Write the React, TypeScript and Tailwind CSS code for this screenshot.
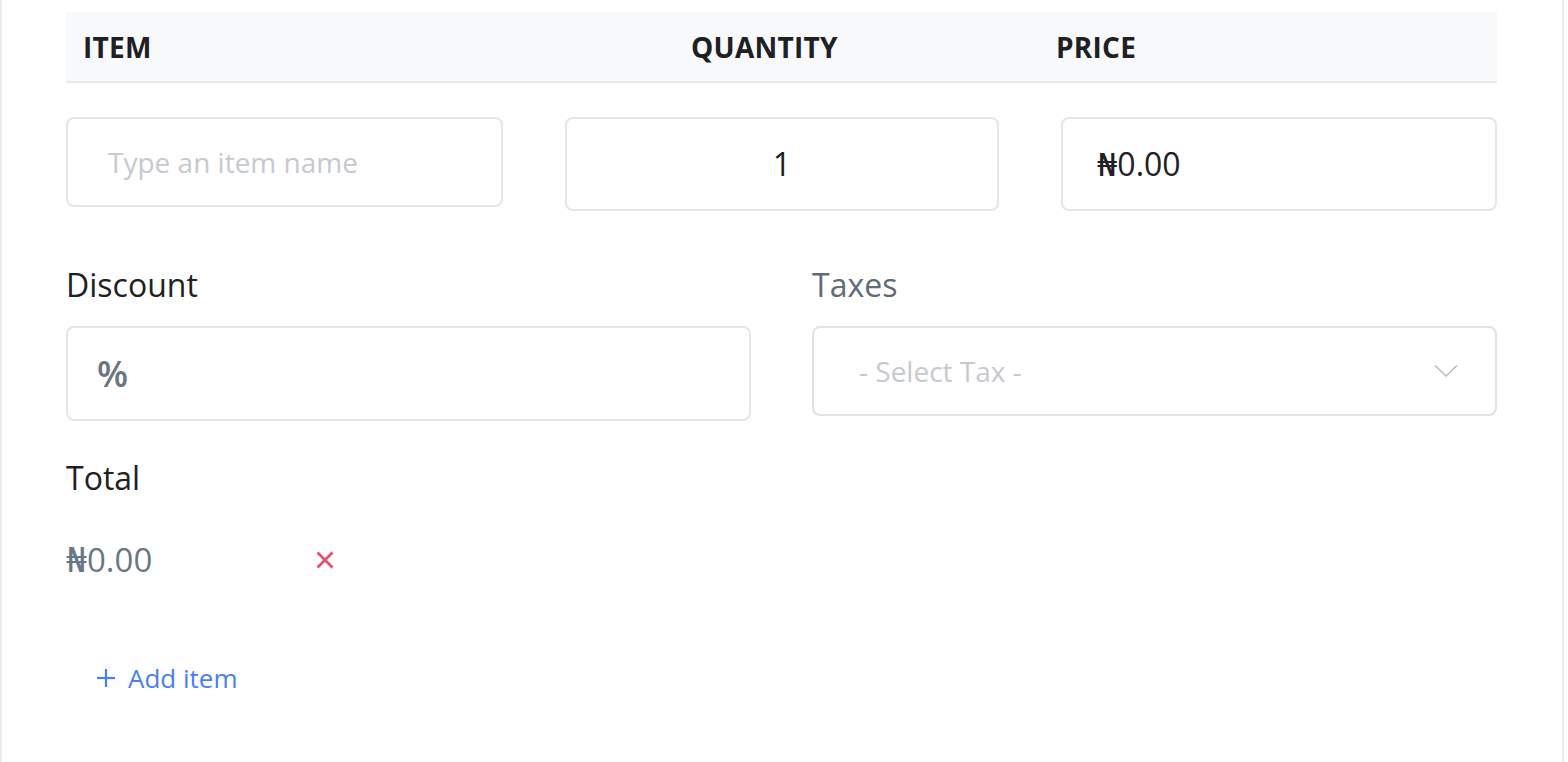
import React from 'react';

const font = { fontFamily: '"Open Sans", "DejaVu Sans", sans-serif' };

const Chevron = () => (
  <svg width="24" height="14" viewBox="0 0 24 14" fill="none">
    <polyline points="1,1.5 12,12 23,1.5" stroke="#b8bbc3" strokeWidth="1.6" />
  </svg>
);

const Cross = () => (
  <svg width="18" height="18" viewBox="0 0 18 18" fill="none">
    <line x1="1.5" y1="1.5" x2="16.5" y2="16.5" stroke="#e0506e" strokeWidth="2.6" />
    <line x1="16.5" y1="1.5" x2="1.5" y2="16.5" stroke="#e0506e" strokeWidth="2.6" />
  </svg>
);

const Plus = () => (
  <svg width="18" height="18" viewBox="0 0 18 18" fill="none">
    <line x1="9" y1="0" x2="9" y2="18" stroke="#4a7ff0" strokeWidth="2.2" />
    <line x1="0" y1="9" x2="18" y2="9" stroke="#4a7ff0" strokeWidth="2.2" />
  </svg>
);

const App: React.FC = () => {
  return (
    <div className="flex h-[762px] w-full bg-white" style={font}>
      <div className="w-[1564px] border-l-2 border-r-2 border-[#ebecf0] pl-[64px] pr-[65px] pt-[12px]">
        {/* table head */}
        <div className="flex h-[71px] items-center border-b-2 border-[#e6e8ee] bg-[#f8f9fb] text-[28px] font-bold tracking-[0.25px] text-[#1f2023]">
          <div className="w-[625px] pl-[17px]">ITEM</div>
          <div className="w-[365px]">QUANTITY</div>
          <div>PRICE</div>
        </div>

        {/* item row */}
        <div className="mt-[34px] grid grid-cols-[437px_434px_436px] items-start gap-x-[62px]">
          <div className="flex h-[90px] items-center rounded-[8px] border-2 border-[#e4e6ec] pl-[40px] text-[28px] text-[#c6c9d0]">
            Type an item name
          </div>
          <div className="flex h-[94px] items-center justify-center rounded-[8px] border-2 border-[#e4e6ec] text-[32px] text-[#1f2023]">
            1
          </div>
          <div className="flex h-[94px] items-center rounded-[8px] border-2 border-[#e4e6ec] pl-[34px] text-[32px] text-[#1f2023]">
            ₦0.00
          </div>
        </div>

        {/* discount / taxes */}
        <div className="mt-[54px] grid grid-cols-2 items-start gap-x-[61px]">
          <div className="flex flex-col">
            <div className="text-[32px] leading-[40px] text-[#1f2023]">Discount</div>
            <div className="mt-[21px] flex h-[95px] items-center rounded-[8px] border-2 border-[#e4e6ec] pl-[29px] text-[36px] font-semibold text-[#6b7685]">
              %
            </div>
          </div>
          <div className="flex flex-col">
            <div className="text-[32px] leading-[40px] text-[#5f6b7a]">Taxes</div>
            <div className="mt-[21px] flex h-[90px] items-center justify-between rounded-[8px] border-2 border-[#e0e2e8] pl-[45px] pr-[37px] text-[28px] text-[#c6c9d0]">
              <span>- Select Tax -</span>
              <Chevron />
            </div>
          </div>
        </div>

        {/* total */}
        <div className="mt-[37px] text-[32px] leading-[40px] text-[#1f2023]">Total</div>
        <div className="mt-[42px] flex items-center">
          <span className="w-[250px] text-[33px] leading-[40px] text-[#6b7685]">₦0.00</span>
          <Cross />
        </div>

        <div className="mt-[80px] flex h-[36px] items-center pl-[31px] text-[26px] text-[#4a7ff0]">
          <span className="mr-[13px] flex">
            <Plus />
          </span>
          <span>Add item</span>
        </div>
      </div>
    </div>
  );
};

export default App;
